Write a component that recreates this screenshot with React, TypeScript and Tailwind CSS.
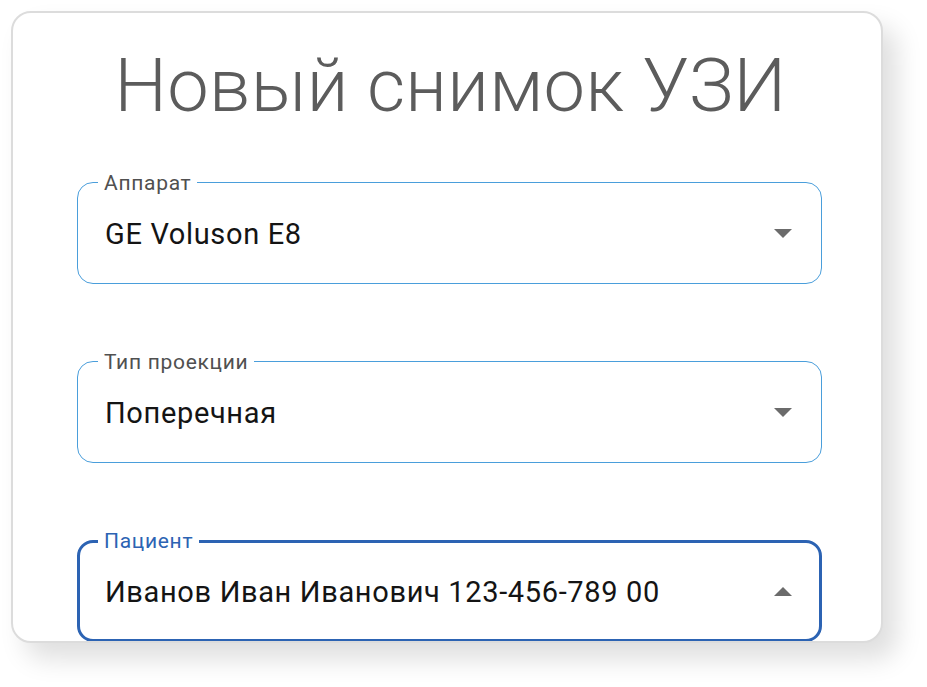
import React from "react";

function Field({
  label,
  value,
  focused,
  up,
}: {
  label: string;
  value: string;
  focused?: boolean;
  up?: boolean;
}) {
  return (
    <div
      className={
        focused
          ? "relative h-[102px] rounded-[16px] border-[3px] border-[#2c63b3] flex items-center pl-[25px] pr-[27px]"
          : "relative h-[102px] rounded-[16px] border border-[#4a9edb] flex items-center pl-[27px] pr-[29px]"
      }
    >
      <span
        className={
          focused
            ? "absolute -top-[15px] left-[18px] bg-white px-[6px] text-[21px] tracking-[0.7px] leading-[26px] text-[#2c63b3]"
            : "absolute -top-[13px] left-[20px] bg-white px-[6px] text-[21px] tracking-[0.7px] leading-[26px] text-[#505050]"
        }
      >
        {label}
      </span>
      <span className="flex-1 pt-[3px] text-[29px] text-[#141414] tracking-[0.65px]">{value}</span>
      <svg width="18" height="9" viewBox="0 0 18 9">
        {up ? (
          <path d="M0 9 L9 0 L18 9 Z" fill="#6b6b6b" />
        ) : (
          <path d="M0 0 L18 0 L9 9 Z" fill="#6b6b6b" />
        )}
      </svg>
    </div>
  );
}

export default function App() {
  return (
    <div
      className="w-[927px] h-[687px] bg-white pl-[11px] pt-[11px]"
      style={{ fontFamily: "Roboto, 'Noto Sans', sans-serif" }}
    >
      <div className="w-[872px] h-[632px] rounded-[20px] border-2 border-[#dcdcdc] bg-white shadow-[14px_16px_26px_rgba(0,0,0,0.13)] overflow-hidden flex flex-col pl-[64px] pr-[59px]">
        <h1 className="text-center font-light text-[74px] tracking-[0.3px] leading-[80px] text-[#5c5c5c] mt-[33px] ml-0 mr-[-2px]">
          Новый снимок УЗИ
        </h1>
        <div className="flex flex-col gap-[77px] mt-[56px]">
          <Field label="Аппарат" value="GE Voluson E8" />
          <Field label="Тип проекции" value="Поперечная" />
          <Field label="Пациент" value="Иванов Иван Иванович 123-456-789 00" focused up />
        </div>
      </div>
    </div>
  );
}
